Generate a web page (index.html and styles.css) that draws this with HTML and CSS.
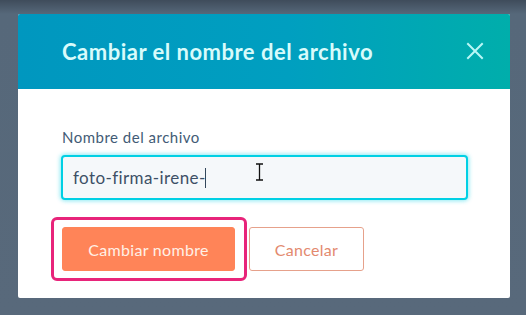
FILE: index.html
```html
<!DOCTYPE html>
<html lang="es">
<head>
<meta charset="utf-8">
<link rel="stylesheet" href="styles.css">
</head>
<body>
<div class="modal">
  <div class="modal-header">
    <h2 class="modal-title">Cambiar el nombre del archivo</h2>
    <span class="close-btn">
      <svg width="18" height="18" viewBox="0 0 18 18"><path d="M2 2 L16 16 M16 2 L2 16" stroke="#b9f7f6" stroke-width="2" fill="none" stroke-linecap="square"/></svg>
    </span>
  </div>
  <div class="modal-body">
    <label class="field-label">Nombre del archivo</label>
    <div class="field-input">
      <span class="field-value">foto-firma-irene-</span><span class="caret"></span>
      <svg class="ibeam" width="9" height="18" viewBox="0 0 9 18"><path d="M1 1 H8 M1 17 H8 M4.5 1 V17" stroke="#111" stroke-width="1.3" fill="none"/></svg>
    </div>
    <div class="actions">
      <div class="highlight">
        <button class="btn btn-primary">Cambiar nombre</button>
      </div>
      <button class="btn btn-secondary">Cancelar</button>
    </div>
  </div>
</div>
</body>
</html>
```

FILE: styles.css
```css
html, body {
  margin: 0;
  padding: 0;
}
body {
  width: 526px;
  height: 315px;
  overflow: hidden;
  background: linear-gradient(to bottom, #3f4c5b 0px, #56687a 14px, #58697b 100%);
  font-family: "Lato", "Open Sans", sans-serif;
  padding-top: 14px;
  box-sizing: border-box;
}
.modal {
  margin-left: 18px;
  width: 492px;
  background: #ffffff;
  border-radius: 2px;
  overflow: hidden;
}
.modal-header {
  height: 75px;
  background: linear-gradient(to right, #0097bf 0%, #009fc0 55%, #00aeab 100%);
  display: flex;
  align-items: center;
  justify-content: space-between;
  padding: 0 26px 0 44px;
}
.modal-title {
  margin: 0;
  font-size: 22px;
  font-weight: 700;
  color: #d8fbfb;
  letter-spacing: 0.5px;
}
.close-btn {
  display: flex;
  width: 18px;
  height: 18px;
  margin-top: -2px;
}
.modal-body {
  padding: 38px 42px 17px 43px;
}
.field-label {
  display: block;
  font-size: 15px;
  line-height: 20px;
  color: #425b76;
  margin-bottom: 8px;
  padding-left: 1px;
  letter-spacing: 0.5px;
}
.field-input {
  position: relative;
  height: 45px;
  box-sizing: border-box;
  border: 2px solid #00d0e4;
  border-radius: 4px;
  background: #f5f8fa;
  box-shadow: 0 0 4px 1px rgba(0, 208, 228, 0.45);
  display: flex;
  align-items: center;
  padding-left: 10px;
  font-size: 17px;
  letter-spacing: 0.4px;
  color: #3d5066;
}
.caret {
  display: inline-block;
  width: 1px;
  height: 20px;
  background: #33475b;
  margin-left: -1px;
}
.ibeam {
  position: absolute;
  left: 192px;
  top: 6px;
}
.actions {
  display: flex;
  align-items: center;
  gap: 2px;
  margin-top: 17px;
  margin-left: -10px;
}
.highlight {
  border: 3px solid #e8247a;
  border-radius: 6px;
  padding: 7px 9px 7px 8px;
  display: flex;
}
.btn {
  font-family: "Lato", "Open Sans", sans-serif;
  font-size: 16px;
  letter-spacing: 0.3px;
  height: 44px;
  border-radius: 3px;
  box-sizing: border-box;
  cursor: pointer;
}
.btn-primary {
  width: 173px;
  background: #ff8458;
  border: 1px solid #ff8458;
  color: #fff0e6;
}
.btn-secondary {
  width: 115px;
  background: #ffffff;
  border: 1px solid #e6a18b;
  color: #e38a6f;
}
```
